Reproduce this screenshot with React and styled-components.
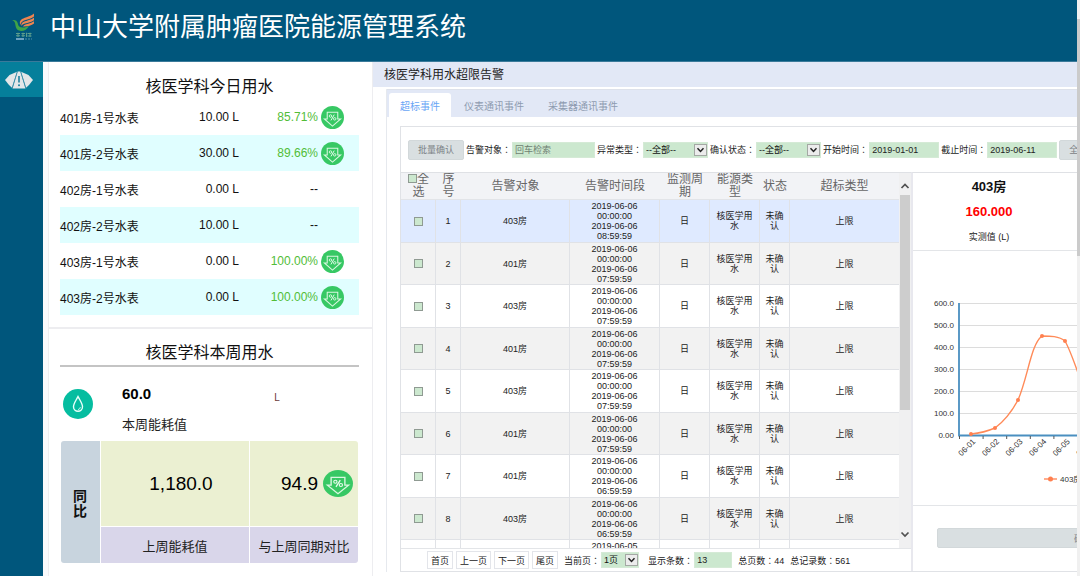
import React from "react";
import styled, { createGlobalStyle } from "styled-components";

const sans = '"Liberation Sans", Arial, "Noto Sans CJK SC", sans-serif';

const GlobalStyle = createGlobalStyle`
  *, *::before, *::after { box-sizing: border-box; }
  body {
    margin: 0;
    background: #fff;
    color: #222;
    font-family: ${sans};
    font-size: 12px;
    overflow: hidden;
  }
  h1, h2, h3, p { margin: 0; font-weight: 400; }
  button, input, select { font-family: inherit; }
`;

/* ---------- shell ---------- */

const Shell = styled.div`
  display: flex;
  height: 100vh;
`;

const Page = styled.div`
  flex: 1;
  min-width: 0;
  display: flex;
  flex-direction: column;
`;

const PageScroll = styled.div`
  width: 3px;
  padding-top: 19px;
  background: #f0f0f0;
  &::before {
    content: "";
    display: block;
    height: 237px;
    background: #cbcbcb;
  }
`;

const Header = styled.header`
  display: flex;
  align-items: center;
  gap: 15px;
  height: 62px;
  padding: 0 0 8px 12px;
  background: #00567c;
  border-bottom: 1px solid #3a7a9a;
  color: #fff;
`;

const HeaderTitle = styled.h1`
  font-size: 26px;
  line-height: 36px;
  white-space: nowrap;
`;

const Body = styled.div`
  flex: 1;
  min-height: 0;
  display: flex;
`;

const Nav = styled.nav`
  width: 43px;
  background: #00567c;
`;

const NavLink = styled.a`
  display: flex;
  height: 35px;
  padding-left: 5px;
  align-items: center;
  background: #057f9b;
`;

/* ---------- left column ---------- */

const Side = styled.aside`
  display: flex;
  flex-direction: column;
  width: 330px;
  flex: none;
  padding-left: 5px;
  background: #fafafc;
`;

const Card = styled.section`
  padding: ${(p) => p.$pad};
  background: #fff;
  border: solid #ededf0;
  border-width: 0 1px;
  & + & {
    flex: 1;
    border-top: 2px solid #ededf0;
  }
`;

const CardTitle = styled.h2`
  color: #111;
  font-size: 16px;
  line-height: 24px;
  text-align: center;
  border-bottom: ${(p) => (p.$ruled ? "2px solid #c4c4c4" : "0")};
`;

const MeterTable = styled.table`
  width: 100%;
  table-layout: fixed;
  border-collapse: collapse;
  color: #111;
`;

const MeterRow = styled.tr`
  height: 36px;
  &:nth-child(even) { background: #e0feff; }
`;

const MeterCell = styled.td`
  padding: 0;
  width: ${(p) => p.$w};
  text-align: ${(p) => p.$align || "left"};
  color: ${(p) => (p.$drop ? "#52bd37" : "inherit")};
  white-space: nowrap;
  svg { display: block; margin-left: 3px; }
`;

const Summary = styled.div`
  display: flex;
  align-items: center;
  gap: 29px;
  height: 74px;
  padding-left: 3px;
`;

const SummaryText = styled.div`
  flex: 1;
  padding-top: 10px;
`;

const SummaryLine = styled.div`
  display: flex;
  align-items: center;
  gap: 123px;
  height: 32px;
`;

const SummaryValue = styled.strong`
  color: #000;
  font-size: 15px;
`;

const SummaryUnit = styled.span`
  padding-top: 8px;
  color: #6b3b3b;
  font-size: 10px;
`;

const SummaryLabel = styled.p`
  font-size: 13px;
  line-height: 32px;
`;

const Compare = styled.div`
  display: grid;
  grid-template-columns: 39px 148px 1fr;
  grid-template-rows: 85px 36px;
  gap: 1px;
  margin: 0 1px;
  border-radius: 3px;
  overflow: hidden;
`;

const CompareHead = styled.div`
  grid-row: span 2;
  display: flex;
  align-items: center;
  justify-content: center;
  padding: 4px 12px 0;
  background: #c8d4de;
  color: #111;
  font-size: 14px;
  font-weight: 700;
  line-height: 15px;
`;

const CompareValue = styled.div`
  display: flex;
  align-items: center;
  justify-content: ${(p) => (p.$end ? "flex-end" : "center")};
  gap: 5px;
  padding: 0 ${(p) => (p.$end ? "5px" : "0")} 0 12px;
  background: #ebf0d2;
  color: #000;
  font-size: 19px;
`;

const CompareLabel = styled.div`
  display: flex;
  align-items: center;
  justify-content: center;
  background: #d9d6ea;
  font-size: 13px;
`;

/* ---------- main column ---------- */

const Main = styled.main`
  flex: 1;
  min-width: 0;
  display: flex;
  flex-direction: column;
  overflow: hidden;
`;

const MainTitle = styled.h2`
  flex: none;
  height: 25px;
  padding: 2px 0 0 11px;
  background: #e2e8f6;
  font-size: 12px;
  line-height: 23px;
`;

const TabPanel = styled.div`
  flex: 1;
  min-height: 0;
  display: flex;
  flex-direction: column;
  margin: 2px 0 4px 13px;
  border-left: 1px solid #e6e9ee;
`;

const Tabs = styled.div`
  flex: none;
  display: flex;
  align-items: flex-end;
  gap: 2px;
  height: 28px;
  padding-left: 2px;
  background: #e2e8f6;
  border-top: 1px solid #dde1ea;
`;

const Tab = styled.button`
  height: 24px;
  padding: 0 11px;
  border: 0;
  border-radius: 3px 3px 0 0;
  background: ${(p) => (p.$active ? "#fff" : "transparent")};
  color: ${(p) => (p.$active ? "#6aa6f5" : "#8e9bb0")};
  font-size: 10px;
`;

const Panel = styled.div`
  flex: 1;
  min-height: 0;
  display: flex;
  flex-direction: column;
  margin: 9px 0 0 13px;
  border: solid #e0e2e6;
  border-width: 1px 0 1px 1px;
`;

const Toolbar = styled.form`
  flex: none;
  display: flex;
  align-items: center;
  gap: 2px;
  height: 45px;
  padding-left: 7px;
  font-size: 9px;
`;

const GreyButton = styled.button`
  flex: none;
  width: ${(p) => p.$w};
  height: 20px;
  padding: 0;
  border: 1px solid #d2d8da;
  border-radius: 2px;
  background: #d9dfe1;
  color: #7c8286;
  font-size: 9px;
`;

const Field = styled.label`
  flex: none;
  display: flex;
  align-items: center;
  gap: 1px;
  font-size: 9px;
  white-space: nowrap;
`;

const Colon = styled.span`
  font-family: "Noto Sans CJK TC", sans-serif;
`;

const TextInput = styled.input`
  width: ${(p) => p.$w};
  height: 16px;
  padding: 0 2px;
  border: 1px solid #d5ead6;
  background: #cce8cf;
  color: #222;
  font-size: 9px;
  &::placeholder { color: #6f7f72; }
`;

const SelectBox = styled.span`
  position: relative;
  display: flex;
  width: ${(p) => p.$w};
  svg { position: absolute; right: 1px; top: 2px; pointer-events: none; }
`;

const Select = styled.select`
  appearance: none;
  width: 100%;
  height: 16px;
  padding: 0 2px;
  border: 1px solid #d5ead6;
  border-radius: 0;
  background: #cce8cf;
  color: #111;
  font-size: 9px;
`;

const Split = styled.div`
  flex: 1;
  min-height: 0;
  display: grid;
  grid-template-columns: 510px minmax(342px, 1fr);
  overflow: hidden;
`;

const List = styled.div`
  display: flex;
  flex-direction: column;
  min-height: 0;
`;

const ListBody = styled.div`
  flex: 1;
  min-height: 0;
  display: flex;
  overflow: hidden;
  border-top: 1px solid #dfe1e5;
  border-bottom: 1px solid #e3e5e8;
`;

const ListClip = styled.div`
  flex: 1;
  overflow: hidden;
`;

const AlarmTable = styled.table`
  width: 100%;
  table-layout: fixed;
  border-collapse: separate;
  border-spacing: 0;
`;

const Th = styled.th`
  width: ${(p) => p.$w || "auto"};
  height: 26px;
  padding: 0 ${(p) => (p.$tight ? "2px" : "5px")};
  background: #f2f3f6;
  border-bottom: 1px solid #e2e4e8;
  color: #666;
  font-size: 12px;
  font-weight: 400;
  line-height: 13px;
  text-align: center;
`;

const AlarmRow = styled.tr`
  height: 43px;
  background: ${(p) => (p.$selected ? "#dfeaff" : "#fff")};
  &:nth-child(even) { height: 42px; background: #f2f2f2; }
`;

const Td = styled.td`
  padding: 0 ${(p) => (p.$tight ? "2px" : "5px")};
  border-right: 1px solid #e0e2e6;
  border-bottom: 1px solid #e0e2e6;
  font-size: 9px;
  line-height: 10px;
  text-align: center;
  &:last-child { border-right: 0; }
`;

const Line = styled.span`
  display: block;
`;

const Check = styled.input`
  appearance: none;
  display: ${(p) => (p.$head ? "inline-block" : "block")};
  width: 9px;
  height: 9px;
  margin: 0 ${(p) => (p.$head ? "0" : "auto")};
  border: 1px solid #8f9a92;
  background: #cce8cf;
`;

const ListScroll = styled.div`
  display: flex;
  flex-direction: column;
  align-items: center;
  width: 12px;
  padding: 9px 1px;
  background: #f0f0f1;
`;

const Thumb = styled.div`
  width: 100%;
  height: 215px;
  margin-top: 4px;
  margin-bottom: auto;
  background: #cdcdcd;
`;

const Pager = styled.div`
  flex: none;
  display: flex;
  align-items: center;
  gap: 3px;
  height: 22px;
  padding-left: 26px;
  font-size: 9px;
`;

const PageButton = styled.button`
  height: 18px;
  padding: 0 3px;
  border: 1px solid #e3e5ea;
  background: #fff;
  color: #222;
  font-size: 9px;
  white-space: nowrap;
`;

const PagerField = styled(Field)`
  margin-left: ${(p) => p.$ml};
`;

const Total = styled.span`
  margin-left: 3px;
  white-space: nowrap;
`;

/* ---------- detail ---------- */

const Detail = styled.aside`
  display: flex;
  flex-direction: column;
  min-height: 0;
  border-left: 2px solid #e8e8ee;
  border-top: 1px solid #dfe1e5;
`;

const Reading = styled.div`
  flex: none;
  width: 152px;
  height: 77px;
  padding-top: 2px;
  text-align: center;
`;

const ReadingName = styled.h3`
  color: #111;
  font-size: 13px;
  font-weight: 700;
  line-height: 24px;
`;

const ReadingValue = styled.p`
  color: #f00;
  font-size: 13px;
  font-weight: 700;
  line-height: 26px;
`;

const ReadingLabel = styled.p`
  font-size: 9px;
  line-height: 24px;
`;

const ChartBox = styled.div`
  flex: 1;
  min-height: 0;
  border: solid #e3e5e8;
  border-width: 1px 0;
  svg { display: block; }
`;

const DetailFooter = styled.div`
  flex: none;
  height: 65px;
  padding: 22px 24px 0;
`;

/* ---------- drawings ---------- */

const DropIcon = ({ width = 23, height = 23 }) => (
  <svg width={width} height={height} viewBox="0 0 24 24" preserveAspectRatio="none" fill="none" aria-hidden="true">
    <circle cx="12" cy="12" r="12" fill="#37c864" />
    <path d="M6.5 6.5H17.5V13.5H20.5L12 21L3.5 13.5H6.5Z" stroke="#d9f7e0" strokeWidth="1.1" />
    <path d="M13.8 9L10.4 15" stroke="#e9fbee" strokeWidth="1" />
    <circle cx="9.9" cy="10.5" r="1.3" stroke="#e9fbee" strokeWidth="0.9" />
    <circle cx="14.3" cy="13.4" r="1.3" stroke="#e9fbee" strokeWidth="0.9" />
  </svg>
);

const WaterIcon = () => (
  <svg width="30" height="30" viewBox="0 0 30 30" fill="none" aria-hidden="true">
    <circle cx="15" cy="15" r="15" fill="#05bda0" />
    <path d="M15 7.5C13 11.5 10.5 14.5 10.5 17.8A4.5 4.5 0 0 0 19.5 17.8C19.5 14.5 17 11.5 15 7.5Z" stroke="#e8fffa" strokeWidth="1.4" />
    <path d="M15 20.5C16.4 20.3 17.2 19.5 17.3 18.2" stroke="#e8fffa" strokeWidth="0.9" />
  </svg>
);

const Logo = () => (
  <svg width="23" height="28" viewBox="0 0 23 28" fill="none" aria-hidden="true">
    <path d="M0 7C3 6.5 5.2 7.5 5.8 10.5C6.3 13.5 8 15.2 12.5 14.4L17 13C15 17 10.5 18.8 7 17.6C3.6 16.3 3.6 12.2 3 10C2.6 8.5 1.6 7.6 0 7Z" fill="#3fa447" />
    <path d="M8.5 12C6.3 7.5 10 5.5 14.5 4.2C18 3.2 20.5 2.2 22 0.6V3.4C19 5.8 15.5 6 12 7.5C9.5 8.6 8.8 10 8.5 12Z" fill="#ee8450" />
    <path d="M9.5 13C8.8 9.6 12 8.6 15.5 7.6C18.5 6.7 20.5 5.9 22 4.6V7.2C19.5 9.4 16 9.4 13 10.5C11 11.2 10 11.8 9.5 13Z" fill="#ee8450" />
    <path d="M11 13.4C12 11.3 14.5 11.2 17 10.5C19 9.9 20.7 9.2 22 8.3V10.5C19.5 12.6 15 13.6 11 13.4Z" fill="#ee8450" />
    <path d="M4 20.5H8M4 22.8H8M6 19.8V24M9.5 20.5H13M9.5 22.8H13M11 19.8V24M14.5 19.8V24M15.5 20.5H19.5M15.5 23H19.5M18 19.8V24" stroke="#5c9d8c" strokeWidth="1.1" />
    <path d="M4 26H12" stroke="#7aaac8" strokeWidth="1.8" />
    <path d="M13 26H20" stroke="#5590a8" strokeWidth="1" strokeDasharray="2 1" />
  </svg>
);

const AlertIcon = () => (
  <svg width="28" height="18" viewBox="0 0 28 18" fill="none" aria-hidden="true">
    <path d="M0 9L4.5 4L12 0.8L7 16.8L4 14Z" fill="#e3e6e8" />
    <path d="M28 9L23.5 4L16 0.8L21 16.8L24 14Z" fill="#e3e6e8" />
    <path d="M12.6 0.5H15.4L20.5 17.5H7.5Z" fill="#e3e6e8" />
    <path d="M14 5V11.5" stroke="#1d7f9c" strokeWidth="1.6" />
    <circle cx="14" cy="14.2" r="1" fill="#1d7f9c" />
    <path d="M12.4 0.5L7.2 17.2M15.6 0.5L20.8 17.2" stroke="#3f8ea8" strokeWidth="0.8" />
  </svg>
);

const SelectArrow = () => (
  <svg width="13" height="12" viewBox="0 0 13 12" fill="none" aria-hidden="true">
    <rect x="0.5" y="0.5" width="12" height="11" fill="#ececec" stroke="#a4a8a4" />
    <path d="M3.5 4.2L6.5 7.4L9.5 4.2" stroke="#222" strokeWidth="1.5" />
  </svg>
);

const ScrollArrow = ({ down }) => (
  <svg width="10" height="9" viewBox="0 0 10 9" fill="none" aria-hidden="true">
    <path d={down ? "M1.5 2.5L5 6L8.5 2.5" : "M1.5 6L5 2.5L8.5 6"} stroke="#505050" strokeWidth="1.7" />
  </svg>
);

const yLabels = ["600.0", "500.0", "400.0", "300.0", "200.0", "100.0", "0.00"];
const days = ["06-01", "06-02", "06-03", "06-04", "06-05", "06-06", "06-07"];
const points = [[58, 183], [82, 177], [105, 149], [129, 85], [152, 90], [176, 150]];

const TrendChart = () => (
  <svg width="340" height="253" viewBox="0 0 340 253" fill="none" fontSize="8" role="img" aria-label="403房">
    {yLabels.map((label, i) => (
      <g key={label}>
        <path d={`M46 ${52.5 + i * 22}H223`} stroke="#dcdcdc" />
        <text x="41" y={55 + i * 22} textAnchor="end" fill="#333">{label}</text>
      </g>
    ))}
    <path d="M46 52V184.5H223" stroke="#4a8fc0" strokeWidth="1.8" />
    {days.map((day, i) => (
      <g key={day}>
        <path d={`M${46.5 + i * 23.6} 185V188`} stroke="#555" />
        <text transform={`translate(${63 + i * 23.6} 191) rotate(-45)`} textAnchor="end" fill="#333">{day}</text>
      </g>
    ))}
    <path d="M58 183C68 182 75 180 82 177C90 171 98 162 105 149C115 126 118 93 129 85C137 85 146 85 152 90C160 104 166 128 176 150" stroke="#ff8a58" strokeWidth="1.4" />
    {points.map(([x, y]) => (
      <circle key={x} cx={x} cy={y} r="2" fill="#ff8050" />
    ))}
    <path d="M131 228H144" stroke="#ff8050" strokeWidth="1.3" />
    <circle cx="137.5" cy="228" r="2.5" fill="#ff8050" />
    <text x="147" y="231" fill="#333">403房</text>
  </svg>
);

/* ---------- data ---------- */

const meters = [
  ["401房-1号水表", "10.00 L", "85.71%"],
  ["401房-2号水表", "30.00 L", "89.66%"],
  ["402房-1号水表", "0.00 L", null],
  ["402房-2号水表", "10.00 L", null],
  ["403房-1号水表", "0.00 L", "100.00%"],
  ["403房-2号水表", "0.00 L", "100.00%"],
];

const alarms = [
  ["403房", "2019-06-06", "08:59:59"],
  ["401房", "2019-06-06", "07:59:59"],
  ["403房", "2019-06-06", "07:59:59"],
  ["401房", "2019-06-06", "07:59:59"],
  ["403房", "2019-06-06", "07:59:59"],
  ["401房", "2019-06-06", "07:59:59"],
  ["401房", "2019-06-06", "06:59:59"],
  ["403房", "2019-06-06", "06:59:59"],
  ["401房", "2019-06-05", "23:59:59"],
];

const columns = [
  ["序号", "25px"],
  ["告警对象", "109px"],
  ["告警时间段", "90px"],
  ["监测周期", "50px"],
  ["能源类型", "50px"],
  ["状态", "30px", true],
  ["超标类型"],
];

const FieldSelect = ({ w, option }) => (
  <SelectBox $w={w}>
    <Select><option>{option}</option></Select>
    <SelectArrow />
  </SelectBox>
);

export default function App() {
  return (
    <Shell>
      <GlobalStyle />
      <Page>
        <Header>
          <Logo />
          <HeaderTitle>中山大学附属肿瘤医院能源管理系统</HeaderTitle>
        </Header>
        <Body>
          <Nav>
            <NavLink href="#alarms" aria-label="告警"><AlertIcon /></NavLink>
          </Nav>
          <Side>
            <Card $pad="13px 13px 12px 11px">
              <CardTitle>核医学科今日用水</CardTitle>
              <MeterTable>
                <tbody>
                  {meters.map(([name, value, drop]) => (
                    <MeterRow key={name}>
                      <MeterCell $w="100px">{name}</MeterCell>
                      <MeterCell $w="79px" $align="right">{value}</MeterCell>
                      <MeterCell $w="79px" $align="right" $drop={!!drop}>{drop || "--"}</MeterCell>
                      <MeterCell>{drop && <DropIcon />}</MeterCell>
                    </MeterRow>
                  ))}
                </tbody>
              </MeterTable>
            </Card>
            <Card $pad="12px 13px 10px 11px">
              <CardTitle $ruled>核医学科本周用水</CardTitle>
              <Summary>
                <WaterIcon />
                <SummaryText>
                  <SummaryLine>
                    <SummaryValue>60.0</SummaryValue>
                    <SummaryUnit>L</SummaryUnit>
                  </SummaryLine>
                  <SummaryLabel>本周能耗值</SummaryLabel>
                </SummaryText>
              </Summary>
              <Compare>
                <CompareHead>同比</CompareHead>
                <CompareValue>1,180.0</CompareValue>
                <CompareValue $end>94.9<DropIcon width={30} height={27} /></CompareValue>
                <CompareLabel>上周能耗值</CompareLabel>
                <CompareLabel>与上周同期对比</CompareLabel>
              </Compare>
            </Card>
          </Side>
          <Main id="alarms">
            <MainTitle>核医学科用水超限告警</MainTitle>
            <TabPanel>
              <Tabs role="tablist">
                <Tab role="tab" aria-selected="true" $active>超标事件</Tab>
                <Tab role="tab" aria-selected="false">仪表通讯事件</Tab>
                <Tab role="tab" aria-selected="false">采集器通讯事件</Tab>
              </Tabs>
              <Panel>
                <Toolbar>
                  <GreyButton type="button" $w="56px">批量确认</GreyButton>
                  <Field><span>告警对象<Colon>：</Colon></span><TextInput $w="83px" placeholder="回车检索" /></Field>
                  <Field><span>异常类型<Colon>：</Colon></span><FieldSelect w="65px" option="--全部--" /></Field>
                  <Field><span>确认状态<Colon>：</Colon></span><FieldSelect w="65px" option="--全部--" /></Field>
                  <Field><span>开始时间<Colon>：</Colon></span><TextInput $w="70px" defaultValue="2019-01-01" /></Field>
                  <Field><span>截止时间<Colon>：</Colon></span><TextInput $w="70px" defaultValue="2019-06-11" /></Field>
                  <GreyButton type="button" $w="56px">全部确认</GreyButton>
                </Toolbar>
                <Split>
                  <List>
                    <ListBody>
                      <ListClip>
                        <AlarmTable>
                          <thead>
                            <tr>
                              <Th $w="35px">
                                <label><Check $head type="checkbox" />全选</label>
                              </Th>
                              {columns.map(([name, w, tight]) => (
                                <Th key={name} $w={w} $tight={tight}>{name}</Th>
                              ))}
                            </tr>
                          </thead>
                          <tbody>
                            {alarms.map(([target, date, end], i) => (
                              <AlarmRow key={i} $selected={i === 0}>
                                <Td><Check type="checkbox" aria-label={`选择 ${i + 1}`} /></Td>
                                <Td>{i + 1}</Td>
                                <Td>{target}</Td>
                                <Td>
                                  <Line>{date}</Line>
                                  <Line>00:00:00</Line>
                                  <Line>{date}</Line>
                                  <Line>{end}</Line>
                                </Td>
                                <Td>日</Td>
                                <Td>核医学用水</Td>
                                <Td $tight>未确认</Td>
                                <Td>上限</Td>
                              </AlarmRow>
                            ))}
                          </tbody>
                        </AlarmTable>
                      </ListClip>
                      <ListScroll aria-hidden="true">
                        <ScrollArrow />
                        <Thumb />
                        <ScrollArrow down />
                      </ListScroll>
                    </ListBody>
                    <Pager>
                      <PageButton>首页</PageButton>
                      <PageButton>上一页</PageButton>
                      <PageButton>下一页</PageButton>
                      <PageButton>尾页</PageButton>
                      <PagerField $ml="3px"><span>当前页<Colon>：</Colon></span><FieldSelect w="38px" option="1页" /></PagerField>
                      <PagerField $ml="6px"><span>显示条数<Colon>：</Colon></span><TextInput $w="38px" defaultValue="13" /></PagerField>
                      <Total>总页数<Colon>：</Colon>44</Total>
                      <Total>总记录数<Colon>：</Colon>561</Total>
                    </Pager>
                  </List>
                  <Detail>
                    <Reading>
                      <ReadingName>403房</ReadingName>
                      <ReadingValue>160.000</ReadingValue>
                      <ReadingLabel>实测值 (L)</ReadingLabel>
                    </Reading>
                    <ChartBox><TrendChart /></ChartBox>
                    <DetailFooter>
                      <GreyButton type="button" $w="100%">确认</GreyButton>
                    </DetailFooter>
                  </Detail>
                </Split>
              </Panel>
            </TabPanel>
          </Main>
        </Body>
      </Page>
      <PageScroll aria-hidden="true" />
    </Shell>
  );
}
